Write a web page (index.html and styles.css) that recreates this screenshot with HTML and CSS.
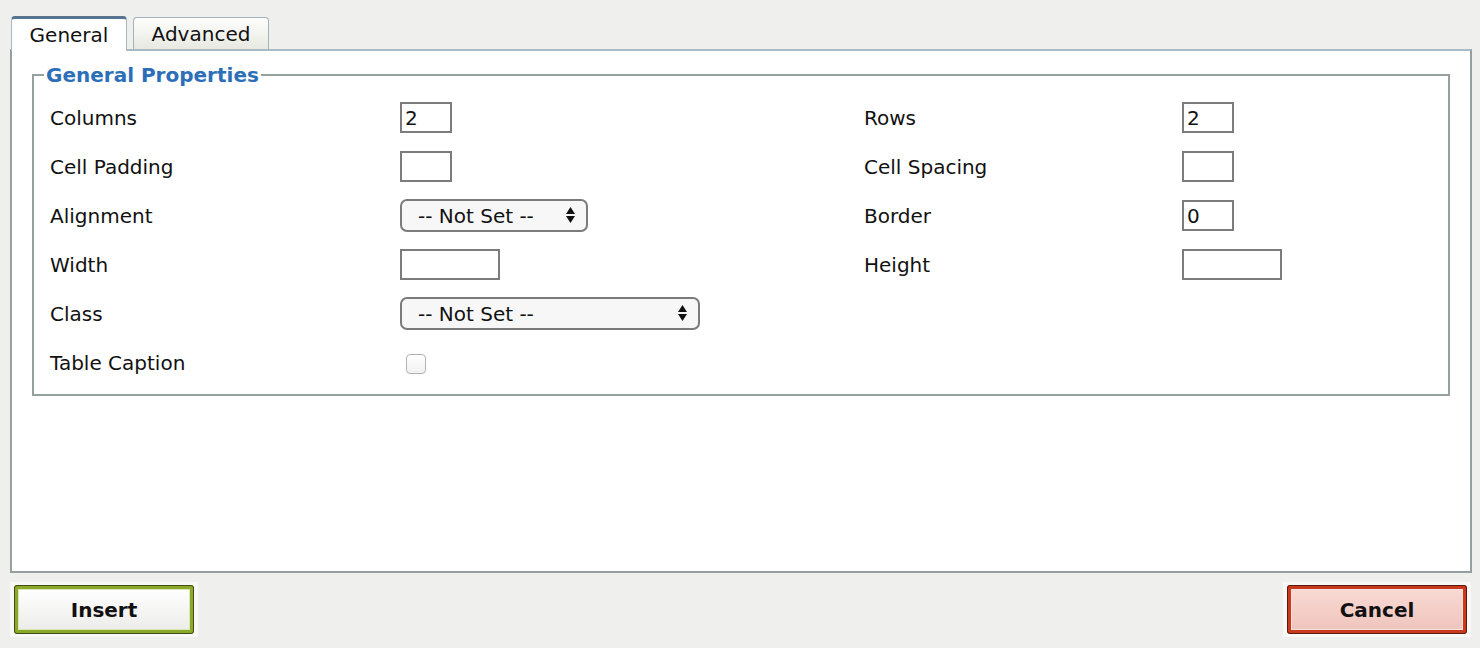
FILE: index.html
```html
<!DOCTYPE html>
<html lang="en">
<head>
    <meta charset="UTF-8">
    <title>Table Properties</title>
    <link rel="stylesheet" href="styles.css">
</head>
<body>
    <div class="tabs">
        <div class="tab active">General</div>
        <div class="tab tab-wide">Advanced</div>
    </div>

    <div class="panel">
        <fieldset class="props">
            <legend>General Properties</legend>
            <div class="props-grid">
                <label>Columns</label>
                <div><input type="text" class="num" value="2"></div>
                <label>Rows</label>
                <div><input type="text" class="num" value="2"></div>

                <label>Cell Padding</label>
                <div><input type="text" class="num"></div>
                <label>Cell Spacing</label>
                <div><input type="text" class="num"></div>

                <label>Alignment</label>
                <div>
                    <div class="select small">
                        <select><option>-- Not Set --</option></select>
                        <svg class="arrows" width="9" height="16" viewBox="0 0 9 16"><polygon points="0,7 4.5,0 9,7"/><polygon points="0,9 4.5,16 9,9"/></svg>
                    </div>
                </div>
                <label>Border</label>
                <div><input type="text" class="num" value="0"></div>

                <label>Width</label>
                <div><input type="text" class="size"></div>
                <label>Height</label>
                <div><input type="text" class="size"></div>

                <label>Class</label>
                <div>
                    <div class="select wide">
                        <select><option>-- Not Set --</option></select>
                        <svg class="arrows" width="9" height="16" viewBox="0 0 9 16"><polygon points="0,7 4.5,0 9,7"/><polygon points="0,9 4.5,16 9,9"/></svg>
                    </div>
                </div>
                <span></span>
                <span></span>

                <label>Table Caption</label>
                <div><input type="checkbox" class="check"></div>
                <span></span>
                <span></span>
            </div>
        </fieldset>
    </div>

    <div class="actions">
        <div class="btn-wrap"><button class="btn insert">Insert</button></div>
        <div class="btn-wrap"><button class="btn cancel">Cancel</button></div>
    </div>
</body>
</html>
```

FILE: styles.css
```css
body {
    margin: 0;
    background-color: #efefed;
    font-family: "DejaVu Sans", Verdana, sans-serif;
    font-size: 20px;
    color: #111;
}

.tabs {
    display: flex;
    align-items: flex-end;
    gap: 6px;
    padding: 16px 0 0 11px;
}

.tab {
    box-sizing: border-box;
    width: 116px;
    height: 32px;
    line-height: 32px;
    text-align: center;
    border: 1px solid #a3b3be;
    border-bottom: none;
    border-radius: 4px 4px 0 0;
    background: linear-gradient(#fdfdfc, #e9e9e2);
}

.tab-wide {
    width: 136px;
}

.tab.active {
    position: relative;
    z-index: 1;
    height: 35px;
    margin-bottom: -2px;
    line-height: 32px;
    background: #fff;
    border-color: #aab8c2;
    border-top: 3px solid #56748f;
}

.panel {
    box-sizing: border-box;
    height: 524px;
    margin: 0 8px 0 10px;
    padding: 0 20px;
    background-color: #fff;
    border: 2px solid #959fa0;
    border-top-color: #a9bac4;
}

.props {
    margin: 12px 0 0;
    padding: 6px 0 7px;
    border: 2px solid #979f9f;
    min-width: 0;
}

.props legend {
    margin-left: 10px;
    padding: 0 2px;
    line-height: 24px;
    font-weight: bold;
    color: #2c6fb8;
}

.props-grid {
    display: grid;
    grid-template-columns: 350px 464px 318px 1fr;
    grid-auto-rows: 49px;
    align-items: center;
    padding-left: 16px;
}

.props-grid input[type="text"] {
    box-sizing: border-box;
    height: 31px;
    margin: 0;
    padding: 0 3px;
    border: 2px solid #7c7c7c;
    font-family: inherit;
    font-size: 20px;
    color: #111;
    background: #fff;
}

.props-grid .num {
    width: 52px;
}

.props-grid .size {
    width: 100px;
    height: 32px;
}

.select {
    position: relative;
    display: inline-block;
    vertical-align: middle;
}

.select select {
    appearance: none;
    -webkit-appearance: none;
    box-sizing: border-box;
    height: 33px;
    margin: 0;
    padding: 0 0 0 16px;
    border: 2px solid #7b7b7b;
    border-radius: 7px;
    background: #f7f7f7;
    font-family: inherit;
    font-size: 20px;
    color: #111;
}

.select.small select {
    width: 188px;
}

.select.wide select {
    width: 300px;
}

.select .arrows {
    position: absolute;
    right: 13px;
    top: 8px;
    fill: #111;
    pointer-events: none;
}

.check {
    appearance: none;
    -webkit-appearance: none;
    box-sizing: border-box;
    width: 20px;
    height: 20px;
    margin: 0 0 0 6px;
    border: 1px solid #b2b2b2;
    border-radius: 4px;
    background: linear-gradient(#fff, #f1f1f1);
    vertical-align: middle;
}

.actions {
    display: flex;
    justify-content: space-between;
    padding: 9px 9px 0 10px;
}

.btn-wrap {
    padding: 3px 4px;
    background-color: #f8f8f6;
}

.btn {
    box-sizing: border-box;
    display: block;
    width: 180px;
    height: 49px;
    margin: 0;
    padding: 0;
    border-radius: 3px;
    font-family: inherit;
    font-size: 20px;
    font-weight: bold;
    color: #111;
    cursor: pointer;
}

.btn.insert {
    border: 4px solid #8aa82a;
    outline: 1px solid #3f4c15;
    outline-offset: -1px;
    box-shadow: inset 0 0 0 1px #dbe6b4;
    background: linear-gradient(#ffffff, #ececea);
}

.btn.cancel {
    border: 4px solid #c9391d;
    outline: 1px solid #5a1a0c;
    outline-offset: -1px;
    box-shadow: inset 0 0 0 1px #f6e2dd;
    background: linear-gradient(#f8d9d3, #efc5bd);
}
```
